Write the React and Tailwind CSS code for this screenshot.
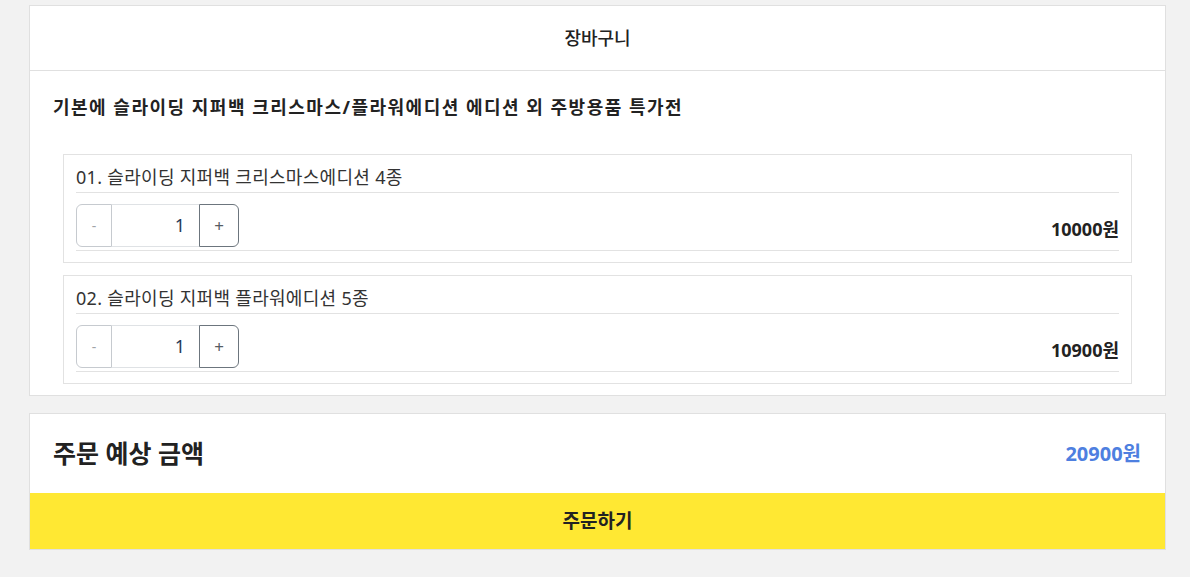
import React, { useState } from "react";

const items = [
  { id: 1, name: "01. 슬라이딩 지퍼백 크리스마스에디션 4종", price: 10000 },
  { id: 2, name: "02. 슬라이딩 지퍼백 플라워에디션 5종", price: 10900 },
];

const CartItem = ({ item, qty, onChange }) => (
  <div className="h-[109px] border border-[#e2e2e2] px-3 pt-3">
    <div className="h-[26px] border-b border-[#e2e2e2] text-[18px] leading-[20px] tracking-[0.3px] text-[#333]">
      {item.name}
    </div>
    <div className="flex h-[58px] items-end justify-between border-b border-[#e2e2e2] pb-[3px]">
      <div className="flex h-[43px]">
        <button
          onClick={() => onChange(Math.max(1, qty - 1))}
          className="w-[36px] rounded-l-[6px] border border-[#c6cacf] text-[14px] text-[#a0a4a8]"
        >
          -
        </button>
        <input
          value={qty}
          readOnly
          className="w-[87px] border-y border-[#dfe2e5] pr-[14px] text-right text-[18px] text-[#1f3b5a] outline-none"
        />
        <button
          onClick={() => onChange(qty + 1)}
          className="w-[40px] rounded-r-[6px] border border-[#6c757d] text-[17px] text-[#555c63]"
        >
          +
        </button>
      </div>
      <div className="pb-[6px] text-[18px] font-bold leading-[24px] text-[#222]">{item.price * qty}원</div>
    </div>
  </div>
);

export default function App() {
  const [qtys, setQtys] = useState({ 1: 1, 2: 1 });
  const total = items.reduce((s, it) => s + it.price * qtys[it.id], 0);

  return (
    <div
      className="min-h-[577px] bg-[#f2f2f2] pt-[5px] pl-[29px]"
      style={{ fontFamily: '"Noto Sans", "Noto Sans CJK KR", sans-serif' }}
    >
      <div className="w-[1137px] border border-[#e0e0e0] bg-white">
        <div className="flex h-[65px] items-center justify-center border-b border-[#e0e0e0] text-[18px] font-medium text-[#222]">
          장바구니
        </div>
        <div className="h-[83px] px-[23px] pt-[23px] text-[18px] font-bold leading-[26px] tracking-[1.5px] text-[#222]">
          기본에 슬라이딩 지퍼백 크리스마스/플라워에디션 에디션 외 주방용품 특가전
        </div>
        <div className="flex flex-col gap-[12px] px-[33px] pb-[11px]">
          {items.map((it) => (
            <CartItem
              key={it.id}
              item={it}
              qty={qtys[it.id]}
              onChange={(q) => setQtys({ ...qtys, [it.id]: q })}
            />
          ))}
        </div>
      </div>

      <div className="mt-[17px] w-[1137px] border border-[#e0e0e0] bg-white">
        <div className="flex h-[79px] items-center justify-between pl-[23px] pr-[24px]">
          <span className="text-[25px] font-semibold text-[#222]">주문 예상 금액</span>
          <span className="text-[20px] font-bold text-[#4e7fe0]">{total}원</span>
        </div>
        <button className="flex h-[56px] w-full items-center justify-center bg-[#ffe833] text-[19px] font-bold text-[#222]">
          주문하기
        </button>
      </div>
    </div>
  );
}
